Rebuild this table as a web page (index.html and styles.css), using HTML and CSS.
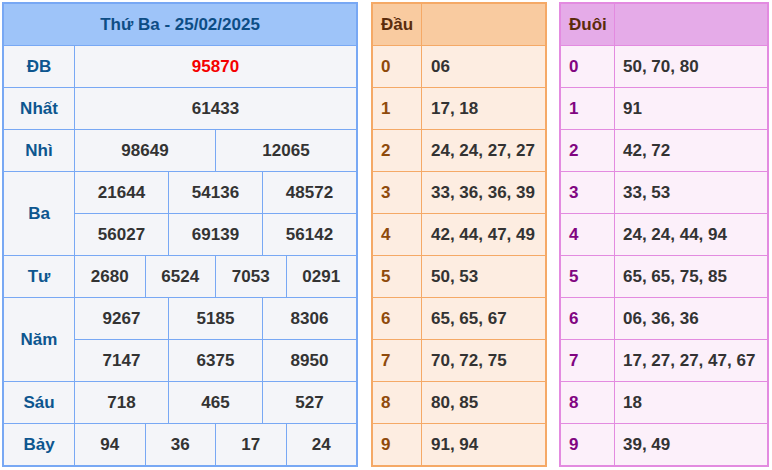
FILE: index.html
```html
<!DOCTYPE html>
<html lang="vi">
<head>
<meta charset="utf-8">
<link rel="stylesheet" href="styles.css">
</head>
<body>
<div class="wrap">
  <div class="kq">
    <div class="c title">Thứ Ba - 25/02/2025</div>
    <div class="c lbl">ĐB</div><div class="c s12 db">95870</div>
    <div class="c lbl">Nhất</div><div class="c s12">61433</div>
    <div class="c lbl">Nhì</div><div class="c s6">98649</div><div class="c s6">12065</div>
    <div class="c lbl r2">Ba</div><div class="c s4">21644</div><div class="c s4">54136</div><div class="c s4">48572</div>
    <div class="c s4">56027</div><div class="c s4">69139</div><div class="c s4">56142</div>
    <div class="c lbl">Tư</div><div class="c s3">2680</div><div class="c s3">6524</div><div class="c s3">7053</div><div class="c s3">0291</div>
    <div class="c lbl r2">Năm</div><div class="c s4">9267</div><div class="c s4">5185</div><div class="c s4">8306</div>
    <div class="c s4">7147</div><div class="c s4">6375</div><div class="c s4">8950</div>
    <div class="c lbl">Sáu</div><div class="c s4">718</div><div class="c s4">465</div><div class="c s4">527</div>
    <div class="c lbl">Bảy</div><div class="c s3">94</div><div class="c s3">36</div><div class="c s3">17</div><div class="c s3">24</div>
  </div>
  <div class="lt dau">
    <div class="h">Đầu</div><div class="h"></div>
    <div class="k">0</div><div class="v">06</div>
    <div class="k">1</div><div class="v">17, 18</div>
    <div class="k">2</div><div class="v">24, 24, 27, 27</div>
    <div class="k">3</div><div class="v">33, 36, 36, 39</div>
    <div class="k">4</div><div class="v">42, 44, 47, 49</div>
    <div class="k">5</div><div class="v">50, 53</div>
    <div class="k">6</div><div class="v">65, 65, 67</div>
    <div class="k">7</div><div class="v">70, 72, 75</div>
    <div class="k">8</div><div class="v">80, 85</div>
    <div class="k">9</div><div class="v">91, 94</div>
  </div>
  <div class="lt duoi">
    <div class="h">Đuôi</div><div class="h"></div>
    <div class="k">0</div><div class="v">50, 70, 80</div>
    <div class="k">1</div><div class="v">91</div>
    <div class="k">2</div><div class="v">42, 72</div>
    <div class="k">3</div><div class="v">33, 53</div>
    <div class="k">4</div><div class="v">24, 24, 44, 94</div>
    <div class="k">5</div><div class="v">65, 65, 75, 85</div>
    <div class="k">6</div><div class="v">06, 36, 36</div>
    <div class="k">7</div><div class="v">17, 27, 27, 47, 67</div>
    <div class="k">8</div><div class="v">18</div>
    <div class="k">9</div><div class="v">39, 49</div>
  </div>
</div>
</body>
</html>
```

FILE: styles.css
```css
html, body { margin: 0; padding: 0; background: #ffffff; }
body { font-family: "Liberation Sans", Arial, sans-serif; font-weight: bold; font-size: 17px; color: #333333; }
.wrap { display: flex; align-items: flex-start; padding: 2px; }

.kq {
  width: 356px; box-sizing: border-box;
  display: grid;
  grid-template-columns: 70px repeat(12, 1fr);
  grid-auto-rows: 41px;
  gap: 1px;
  background: #78a8f4;
  border: 2px solid #78a8f4;
}
.kq .c { background: #f4f5f9; display: flex; align-items: center; justify-content: center; }
.kq .title { grid-column: 1 / -1; background: #9ec4f9; color: #0d4d85; }
.kq .lbl { grid-column: 1; color: #0d568f; }
.kq .r2 { grid-row: span 2; }
.kq .s12 { grid-column: span 12; }
.kq .s6 { grid-column: span 6; }
.kq .s4 { grid-column: span 4; }
.kq .s3 { grid-column: span 3; }
.kq .db { color: #f40000; }

.lt {
  box-sizing: border-box;
  display: grid;
  grid-auto-rows: 41px;
  gap: 1px;
  border: 2px solid;
}
.lt > div { display: flex; align-items: center; padding-left: 8px; }
.lt .h { color: #5b2b0c; }

.dau { width: 176px; margin-left: 13px; grid-template-columns: 48px 1fr; background: #f5a966; border-color: #f5a966; }
.dau .h { background: #f9cba0; }
.dau .k, .dau .v { background: #fdede1; }
.dau .k { color: #8f4a0b; }
.dau .v { padding-left: 9px; }

.duoi { width: 210px; margin-left: 12px; grid-template-columns: 53px 1fr; background: #e38be0; border-color: #e38be0; }
.duoi .h { background: #e5abe8; }
.duoi .k, .duoi .v { background: #fcf0fa; }
.duoi .k { color: #810581; }
```
